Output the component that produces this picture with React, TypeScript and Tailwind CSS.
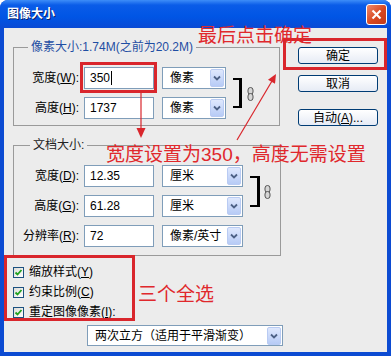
import React from "react";

const FONT = "font-['Liberation_Sans','Noto_Sans_CJK_SC',sans-serif]";

function DropBtn() {
  return (
    <div className="w-[14px] h-[18px] rounded-[2px] border border-[#b9cbf3] bg-[linear-gradient(to_bottom,#dfe8fd,#b7cbf6)] flex items-center justify-center">
      <svg width="8" height="6" viewBox="0 0 8 6">
        <polyline points="1,1.5 4,4.5 7,1.5" fill="none" stroke="#4d6185" strokeWidth="1.8" />
      </svg>
    </div>
  );
}

function Select({ cls, children }: { cls: string; children: React.ReactNode }) {
  return (
    <div className={`flex items-center justify-between border border-[#7f9db9] bg-white pl-[7px] pr-[1px] text-[12px] text-black ${cls}`}>
      <span>{children}</span>
      <DropBtn />
    </div>
  );
}

function Input({ children, cursor }: { children: React.ReactNode; cursor?: boolean }) {
  return (
    <div className="flex items-center w-[70px] h-[22px] border border-[#7f9db9] bg-white pl-[5px] text-[12px] text-black">
      <span>{children}</span>
      {cursor && <span className="ml-[1px] w-px h-[14px] bg-black" />}
    </div>
  );
}

function LinkIcon() {
  return (
    <svg width="7" height="14" viewBox="0 0 7 14">
      <rect x="1" y="0.5" width="5" height="7" rx="2.5" fill="#d6d6d6" stroke="#555" strokeWidth="1" />
      <rect x="1" y="6.5" width="5" height="7" rx="2.5" fill="#d6d6d6" stroke="#555" strokeWidth="1" />
    </svg>
  );
}

function Check({ children }: { children: React.ReactNode }) {
  return (
    <div className="flex items-center h-[20px] text-[12px] text-black">
      <div className="w-[11px] h-[11px] border border-[#1c5180] bg-[linear-gradient(to_bottom_right,#dcdcd7,#ffffff)] flex items-center justify-center">
        <svg width="9" height="9" viewBox="0 0 9 9">
          <polyline points="1.5,4.5 3.5,6.5 7.5,2" fill="none" stroke="#21a121" strokeWidth="1.8" />
        </svg>
      </div>
      <span className="ml-[5px]">{children}</span>
    </div>
  );
}

function Button({ children }: { children: React.ReactNode }) {
  return (
    <div className="w-[80px] h-[17px] rounded-[3px] border border-[#003c74] bg-[linear-gradient(to_bottom,#ffffff,#e6ebf5)] flex items-center justify-center text-[12px] text-black">
      {children}
    </div>
  );
}

export default function App() {
  return (
    <div className={`${FONT} relative w-[391px] h-[356px] bg-[#0c4bd2] rounded-t-[8px] overflow-hidden flex flex-col`}>
      {/* Title bar */}
      <div className="h-[28px] flex items-center justify-between pl-[7px] pr-[4px] bg-[linear-gradient(to_bottom,#3d8df8_0%,#0a5ce8_18%,#0055e5_60%,#0a4ad4_100%)]">
        <span className="text-white font-bold text-[12px] [text-shadow:1px_1px_0_#0a1f6a]">图像大小</span>
        <div className="w-[21px] h-[21px] rounded-[3px] border border-white bg-[linear-gradient(to_bottom_right,#ee8a6c,#d8471f_55%,#c23a1a)] flex items-center justify-center">
          <svg width="13" height="13" viewBox="0 0 13 13">
            <line x1="2.5" y1="2.5" x2="10.5" y2="10.5" stroke="white" strokeWidth="2.2" />
            <line x1="10.5" y1="2.5" x2="2.5" y2="10.5" stroke="white" strokeWidth="2.2" />
          </svg>
        </div>
      </div>

      {/* Client */}
      <div className="flex-1 mx-[4px] mb-[4px] bg-[#ececec] flex">
        {/* Left column */}
        <div className="w-[276px] pl-[9px] pt-[12px] flex flex-col">
          <fieldset className="h-[86px] border border-[#9a9a9a]">
            <legend className="ml-[14px] px-[3px] text-[12px] leading-[14px] text-[#1f4ea3]">像素大小:1.74M(之前为20.2M)</legend>
            <div className="flex items-start mt-[13px]">
              <div className="flex flex-col gap-[8px]">
                <div className="flex items-center">
                  <div className="w-[65px] text-right text-[12px] text-black">宽度(<u>W</u>):</div>
                  <div className="ml-[5px]"><Input cursor>350</Input></div>
                  <Select cls="ml-[8px] w-[64px] h-[22px]">像素</Select>
                </div>
                <div className="flex items-center">
                  <div className="w-[65px] text-right text-[12px] text-black">高度(<u>H</u>):</div>
                  <div className="ml-[5px]"><Input>1737</Input></div>
                  <Select cls="ml-[8px] w-[64px] h-[22px]">像素</Select>
                </div>
              </div>
              <div className="ml-[7px] mt-[11px] w-[9px] h-[30px] border-t-2 border-b-2 border-r-[3px] border-black" />
              <div className="ml-[5px] mt-[20px]"><LinkIcon /></div>
            </div>
          </fieldset>

          <fieldset className="mt-[12px] w-[268px] h-[118px] border border-[#9a9a9a]">
            <legend className="ml-[16px] px-[3px] text-[12px] leading-[14px] text-[#222]">文档大小:</legend>
            <div className="flex items-start mt-[13px]">
              <div className="flex flex-col gap-[8px]">
                <div className="flex items-center">
                  <div className="w-[65px] text-right text-[12px] text-black">宽度(<u>D</u>):</div>
                  <div className="ml-[5px]"><Input>12.35</Input></div>
                  <Select cls="ml-[8px] w-[81px] h-[22px]">厘米</Select>
                </div>
                <div className="flex items-center">
                  <div className="w-[65px] text-right text-[12px] text-black">高度(<u>G</u>):</div>
                  <div className="ml-[5px]"><Input>61.28</Input></div>
                  <Select cls="ml-[8px] w-[81px] h-[22px]">厘米</Select>
                </div>
                <div className="flex items-center">
                  <div className="w-[65px] text-right text-[12px] text-black">分辨率(<u>R</u>):</div>
                  <div className="ml-[5px]"><Input>72</Input></div>
                  <Select cls="ml-[8px] w-[81px] h-[22px]">像素/英寸</Select>
                </div>
              </div>
              <div className="ml-[7px] mt-[11px] w-[10px] h-[31px] border-t-2 border-b-2 border-r-[3px] border-black" />
              <div className="ml-[4px] mt-[20px]"><LinkIcon /></div>
            </div>
          </fieldset>

          <div className="mt-[6px] flex flex-col">
            <Check>缩放样式(<u>Y</u>)</Check>
            <Check>约束比例(<u>C</u>)</Check>
            <Check>重定图像像素(<u>I</u>):</Check>
          </div>

          <Select cls="mt-[3px] ml-[74px] w-[196px] h-[21px]">两次立方（适用于平滑渐变）</Select>
        </div>

        {/* Right column */}
        <div className="pl-[18px] pt-[19px] flex flex-col">
          <Button>确定</Button>
          <div className="mt-[11px]"><Button>取消</Button></div>
          <div className="mt-[17px]"><Button>自动(<u>A</u>)...</Button></div>
        </div>
      </div>

      {/* Annotations overlay */}
      <div className="absolute left-[80px] top-[62px] w-[77px] h-[31px] border-[3px] border-[#d9262c]" />
      <div className="absolute left-[283px] top-[38px] w-[104px] h-[32px] border-[3px] border-[#d9262c]" />
      <div className="absolute left-[4px] top-[255px] w-[131px] h-[66px] border-[3px] border-[#d9262c]" />

      <div className="absolute left-[198px] top-[26px] text-[19px] leading-[20px] text-[#e0282c]">最后点击确定</div>
      <div className="absolute left-[106px] top-[145px] text-[19px] leading-[20px] text-[#e0282c]">宽度设置为350，高度无需设置</div>
      <div className="absolute left-[138px] top-[285px] text-[19px] leading-[20px] text-[#e0282c]">三个全选</div>

      <svg className="absolute left-0 top-0 pointer-events-none" width="391" height="356" viewBox="0 0 391 356">
        <line x1="141" y1="93" x2="141" y2="130" stroke="#d9262c" strokeWidth="1.2" />
        <polygon points="136.5,128 145.5,128 141,138" fill="#d9262c" />
        <line x1="237" y1="140" x2="272" y2="81" stroke="#d9262c" strokeWidth="1.2" />
        <polygon points="276,74 275,83.7 268,79.7" fill="#d9262c" />
      </svg>
    </div>
  );
}
